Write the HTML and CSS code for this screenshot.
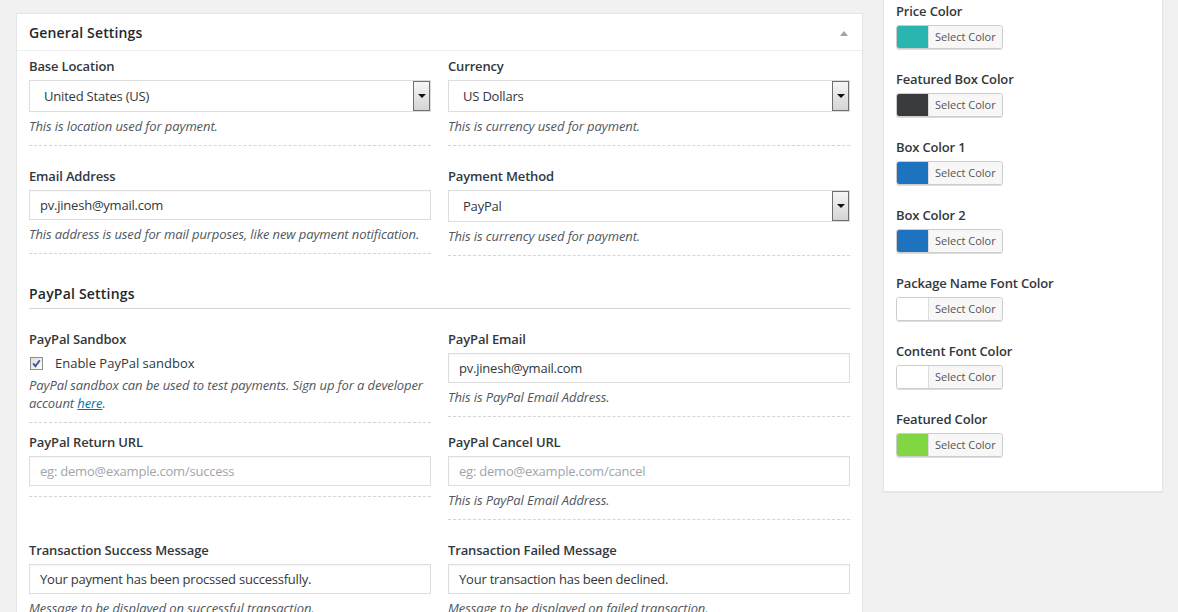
FILE: index.html
```html
<!DOCTYPE html>
<html>
<head>
<meta charset="utf-8">
<link rel="stylesheet" href="styles.css">
</head>
<body>
<div class="wrap">
  <div class="panel main">
    <div class="panel-head">
      <h2 class="panel-title">General Settings</h2>
      <span class="caret-up"></span>
    </div>
    <div class="panel-body">
      <div class="row row-first">
        <div class="field">
          <div class="label">Base Location</div>
          <div class="select"><span class="val">United States (US)</span><span class="arrow"><span class="tri"></span></span></div>
          <div class="desc">This is location used for payment.</div>
        </div>
        <div class="field">
          <div class="label">Currency</div>
          <div class="select"><span class="val">US Dollars</span><span class="arrow"><span class="tri"></span></span></div>
          <div class="desc">This is currency used for payment.</div>
        </div>
      </div>
      <div class="row">
        <div class="field">
          <div class="label">Email Address</div>
          <div class="input">pv.jinesh@ymail.com</div>
          <div class="desc">This address is used for mail purposes, like new payment notification.</div>
        </div>
        <div class="field">
          <div class="label">Payment Method</div>
          <div class="select"><span class="val">PayPal</span><span class="arrow"><span class="tri"></span></span></div>
          <div class="desc">This is currency used for payment.</div>
        </div>
      </div>

      <h3 class="section-title">PayPal Settings</h3>

      <div class="row">
        <div class="field">
          <div class="label">PayPal Sandbox</div>
          <div class="check-row">
            <svg class="checkbox" width="13" height="13" viewBox="0 0 13 13">
              <defs>
                <linearGradient id="cbg" x1="0" y1="0" x2="1" y2="1">
                  <stop offset="0" stop-color="#dcdcdc"/>
                  <stop offset="1" stop-color="#ffffff"/>
                </linearGradient>
              </defs>
              <rect x="0.5" y="0.5" width="12" height="12" fill="url(#cbg)" stroke="#8e8f8f"/>
              <path d="M3.2 6.4 L5.4 9.2 L9.8 3.2" fill="none" stroke="#3d4f9a" stroke-width="1.8"/>
            </svg>
            <span class="check-text">Enable PayPal sandbox</span>
          </div>
          <div class="desc desc-tight">PayPal sandbox can be used to test payments. Sign up for a developer account <a class="link" href="#">here</a>.</div>
        </div>
        <div class="field">
          <div class="label">PayPal Email</div>
          <div class="input">pv.jinesh@ymail.com</div>
          <div class="desc">This is PayPal Email Address.</div>
        </div>
      </div>
      <div class="row row-close">
        <div class="field">
          <div class="label">PayPal Return URL</div>
          <div class="input placeholder">eg: demo@example.com/success</div>
        </div>
        <div class="field">
          <div class="label">PayPal Cancel URL</div>
          <div class="input placeholder">eg: demo@example.com/cancel</div>
          <div class="desc">This is PayPal Email Address.</div>
        </div>
      </div>
      <div class="row row-last">
        <div class="field">
          <div class="label">Transaction Success Message</div>
          <div class="input">Your payment has been procssed successfully.</div>
          <div class="desc">Message to be displayed on successful transaction.</div>
        </div>
        <div class="field">
          <div class="label">Transaction Failed Message</div>
          <div class="input">Your transaction has been declined.</div>
          <div class="desc">Message to be displayed on failed transaction.</div>
        </div>
      </div>
    </div>
  </div>

  <div class="panel side">
    <div class="color-item">
      <div class="label">Price Color</div>
      <div class="color-btn"><span class="swatch" style="background:#2ab5b1"></span><span class="btn-text">Select Color</span></div>
    </div>
    <div class="color-item">
      <div class="label">Featured Box Color</div>
      <div class="color-btn"><span class="swatch" style="background:#3a3b3f"></span><span class="btn-text">Select Color</span></div>
    </div>
    <div class="color-item">
      <div class="label">Box Color 1</div>
      <div class="color-btn"><span class="swatch" style="background:#1e73be"></span><span class="btn-text">Select Color</span></div>
    </div>
    <div class="color-item">
      <div class="label">Box Color 2</div>
      <div class="color-btn"><span class="swatch" style="background:#1e73be"></span><span class="btn-text">Select Color</span></div>
    </div>
    <div class="color-item">
      <div class="label">Package Name Font Color</div>
      <div class="color-btn"><span class="swatch" style="background:#ffffff"></span><span class="btn-text">Select Color</span></div>
    </div>
    <div class="color-item">
      <div class="label">Content Font Color</div>
      <div class="color-btn"><span class="swatch" style="background:#ffffff"></span><span class="btn-text">Select Color</span></div>
    </div>
    <div class="color-item">
      <div class="label">Featured Color</div>
      <div class="color-btn"><span class="swatch" style="background:#81d742"></span><span class="btn-text">Select Color</span></div>
    </div>
  </div>
</div>
</body>
</html>
```
FILE: styles.css
```css
* { box-sizing: border-box; }
html, body { margin: 0; padding: 0; }
body {
  background: #f1f1f1;
  font-family: "Open Sans", "Noto Sans", sans-serif;
  font-size: 13px;
  color: #32373c;
  height: 612px;
  overflow: hidden;
}
.wrap {
  display: flex;
  align-items: flex-start;
  padding-left: 16px;
  gap: 20px;
}
.panel {
  background: #fff;
  border: 1px solid #e5e5e5;
  box-shadow: 0 1px 1px rgba(0,0,0,0.04);
}
.main {
  width: 847px;
  margin-top: 13px;
}
.panel-head {
  height: 37px;
  border-bottom: 1px solid #eee;
  padding: 2px 12px 0;
  display: flex;
  align-items: center;
  justify-content: space-between;
}
.panel-title {
  margin: 0;
  font-size: 14px;
  font-weight: 600;
  line-height: 20px;
  letter-spacing: 0.15px;
  color: #23282d;
}
.caret-up {
  width: 0;
  height: 0;
  border-left: 4px solid transparent;
  border-right: 4px solid transparent;
  border-bottom: 5px solid #a0a5aa;
  margin-right: 2px;
}
.panel-body {
  padding: 6px 12px 0;
}
.row {
  display: grid;
  grid-template-columns: 402px 402px;
  column-gap: 17px;
  align-items: start;
  margin-top: 21px;
}
.row-first { margin-top: 0; }
.row-close { margin-top: 10px; }
.row-last { margin-top: 21px; }
.field {
  padding-bottom: 10px;
  border-bottom: 1px dashed #d5d5d5;
}
.label {
  font-weight: 600;
  font-size: 13px;
  line-height: 18px;
  letter-spacing: -0.15px;
  color: #32373c;
  margin-bottom: 5px;
}
.select {
  height: 32px;
  border: 1px solid #ddd;
  display: flex;
  background: #fff;
}
.select .val {
  flex: 1;
  padding-left: 14px;
  line-height: 30px;
  font-size: 13px;
  letter-spacing: -0.2px;
  color: #32373c;
}
.arrow {
  width: 17px;
  border: 1px solid #6f6f6f;
  background: linear-gradient(#f6f6f6, #d4d4d4);
  display: flex;
  align-items: center;
  justify-content: center;
}
.tri {
  width: 0;
  height: 0;
  border-left: 4px solid transparent;
  border-right: 4px solid transparent;
  border-top: 4px solid #111;
}
.input {
  height: 30px;
  border: 1px solid #ddd;
  padding-left: 10px;
  line-height: 28px;
  font-size: 13px;
  letter-spacing: -0.22px;
  color: #32373c;
  box-shadow: inset 0 1px 2px rgba(0,0,0,0.04);
}
.input.placeholder { color: #a0a5aa; }
.desc {
  margin-top: 5px;
  font-style: italic;
  font-size: 13px;
  line-height: 18px;
  letter-spacing: -0.1px;
  color: #50575e;
}
.desc-tight { margin-top: 3px; }
.link { color: #0073aa; text-decoration: underline; }
.section-title {
  margin: 28px 0 0;
  font-size: 14px;
  font-weight: 600;
  line-height: 20px;
  letter-spacing: 0.2px;
  padding-bottom: 4px;
  border-bottom: 1px solid #d5d5d5;
  color: #23282d;
}
.check-row {
  display: flex;
  align-items: center;
  height: 20px;
  padding-left: 1px;
}
.checkbox { flex: none; }
.check-text {
  margin-left: 12px;
  font-size: 13px;
  color: #32373c;
}
.side {
  width: 280px;
  margin-top: -11px;
  padding: 12px 12px 13px;
}
.color-item { margin-bottom: 21px; }
.color-btn {
  display: inline-flex;
  height: 24px;
  border: 1px solid #ccc;
  border-radius: 3px;
  overflow: hidden;
  box-shadow: 0 1px 0 #ddd;
  vertical-align: top;
}
.swatch {
  width: 31px;
  display: block;
}
.btn-text {
  display: block;
  background: #f7f7f7;
  border-left: 1px solid #ddd;
  padding: 0 6px;
  font-size: 11px;
  line-height: 22px;
  color: #555;
}
```
